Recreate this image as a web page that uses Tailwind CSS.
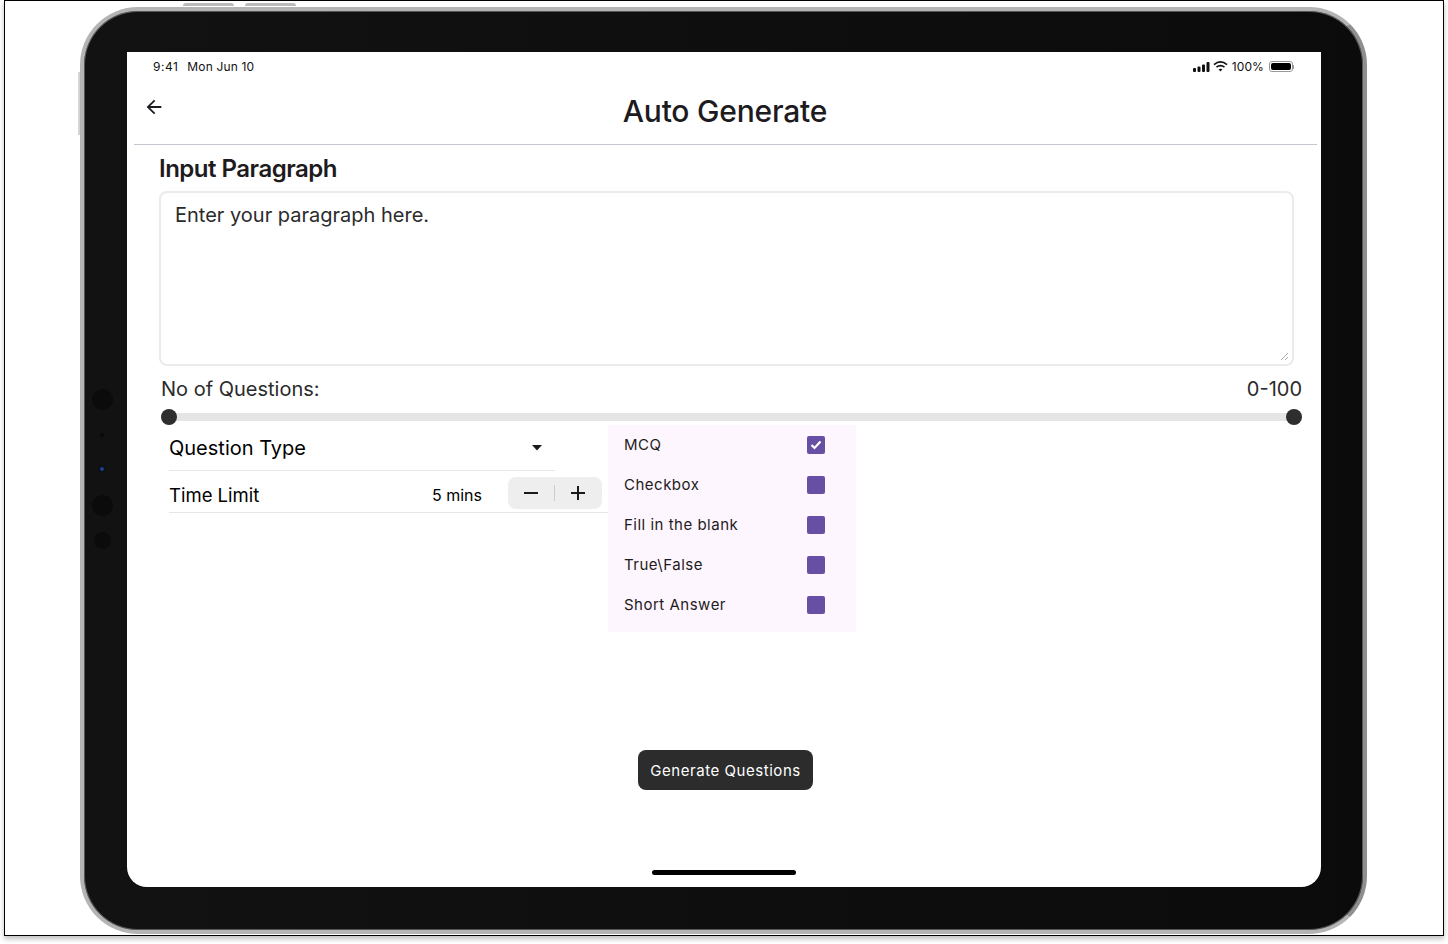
<!DOCTYPE html>
<html lang="en">
<head>
  <meta charset="UTF-8" />
  <title>Auto Generate</title>
  <script src="https://cdn.jsdelivr.net/npm/@tailwindcss/browser@4"></script>
</head>
<body class="bg-white h-[944px] w-[1448px] overflow-hidden font-['Inter',sans-serif]">
  <!-- mockup frame -->
  <div class="ml-[4px] w-[1440px] h-[936px] border border-black bg-white shadow-[0_3px_5px_rgba(0,0,0,0.25)] pl-[75px] pt-[6px]">

    <!-- device -->
    <div class="relative w-[1287px] h-[927px] rounded-[58px] bg-linear-to-r from-[#121212] to-[#0b0b0b] border-4 border-[#b4b4b4] border-r-[#8f8f8f] pl-[43px] pt-[41px] shadow-[inset_0_0_0_1px_#555]">
      <!-- hardware buttons -->
      <div class="absolute -top-[8px] left-[99px] w-[51px] h-[3px] rounded-t bg-[#bbbbbb]"></div>
      <div class="absolute -top-[8px] left-[161px] w-[51px] h-[3px] rounded-t bg-[#bbbbbb]"></div>
      <div class="absolute -left-[6px] top-[61px] w-[2px] h-[63px] bg-[#d4d4d4]"></div>
      <!-- camera dots -->
      <div class="absolute left-[8px] top-[378px] w-[21px] h-[21px] rounded-full bg-[#0b0b0b]"></div>
      <div class="absolute left-[16px] top-[422px] w-[4px] h-[4px] rounded-full bg-[#0a0a0a]"></div>
      <div class="absolute left-[14px] top-[454px] w-[8px] h-[8px] rounded-full bg-[#1d3f8f] border-2 border-[#0d0f16]"></div>
      <div class="absolute left-[8px] top-[484px] w-[21px] h-[21px] rounded-full bg-[#0b0b0b]"></div>
      <div class="absolute left-[10px] top-[521px] w-[17px] h-[17px] rounded-full bg-[#0b0b0b]"></div>

      <!-- screen -->
      <div class="relative w-[1194px] h-[835px] bg-white rounded-b-[20px] overflow-hidden flex flex-col text-[#1d1b20]">
        <!-- status bar -->
        <div class="h-[29px] shrink-0 flex items-center justify-between pl-[26px] pr-[27px] text-[12px] tracking-[0.1px] text-[#111]">
          <div class="flex gap-[8px]"><span class="tracking-[0.5px]">9:41</span><span class="ml-[1px] tracking-[0.15px]">Mon Jun 10</span></div>
          <div class="flex items-center gap-[3px]">
            <svg width="17" height="10" viewBox="0 0 17 10" fill="#111"><rect x="0" y="6" width="3" height="4" rx="1"/><rect x="4.5" y="4.5" width="3" height="5.5" rx="1"/><rect x="9" y="2.5" width="3" height="7.5" rx="1"/><rect x="13.5" y="0" width="3" height="10" rx="1"/></svg>
            <svg width="15" height="11" viewBox="0 0 15 11" fill="none" stroke="#111" stroke-width="1.7"><path d="M1 3.6C5 .3 10 .3 14 3.6"/><path d="M3.5 6.1C6 4.2 9 4.2 11.500 6.100"/><path d="M7.500 10.500 5.500 8.300C6.700 7.500 8.300 7.500 9.500 8.300Z" fill="#111" stroke="none"/></svg>
            <span class="ml-[1px]">100%</span>
            <div class="ml-[2px] flex items-center">
              <div class="w-[24px] h-[11px] rounded-[3px] border border-[#999] p-[1px]"><div class="w-full h-full rounded-[2px] bg-black"></div></div>
              <div class="w-[1px] h-[4px] bg-[#999]"></div>
            </div>
          </div>
        </div>

        <!-- app bar -->
        <div class="relative h-[64px] shrink-0 ml-[7px] mr-[4px] border-b border-[#cac4d0] flex justify-center pt-[12px]">
          <svg class="absolute left-[9px] top-[15px]" width="22" height="22" viewBox="0 0 24 24" fill="#1d1b20"><path d="M20 11H7.830l5.590-5.590L12 4l-8 8 8 8 1.410-1.410L7.830 13H20v-2z"/></svg>
          <h1 class="text-[30px] leading-[36px] font-medium tracking-[-0.2px] pr-[1px]">Auto Generate</h1>
        </div>

        <!-- form -->
        <div class="pl-[32px] pr-[19px] flex flex-col flex-1">
          <h2 class="mt-[8px] text-[24px] leading-[32px] font-semibold tracking-[-0.5px]">Input Paragraph</h2>
          <div class="relative mt-[6px] w-[1135px] h-[175px] rounded-[8px] border-2 border-[#ebebeb] pl-[14px] pt-[8px] text-[20px] leading-[28px] text-[#2b2b2b]">
            Enter your paragraph here.
            <svg class="absolute right-[3px] bottom-[3px]" width="9" height="9" viewBox="0 0 9 9" stroke="#aaa" fill="none"><path d="M1 8 8 1M5 8 8 5"/></svg>
          </div>

          <div class="mt-[9px] ml-[2px] flex justify-between text-[20px] leading-[28px] text-[#2b2b2b]">
            <span>No of Questions:</span><span>0-100</span>
          </div>

          <!-- slider -->
          <div class="relative mt-[10px] ml-[2px] w-[1141px] h-[8px] bg-[#e5e5e5] rounded-full">
            <div class="absolute left-0 -top-[4px] w-[16px] h-[16px] rounded-full bg-[#2e2e2e]"></div>
            <div class="absolute right-0 -top-[4px] w-[16px] h-[16px] rounded-full bg-[#2e2e2e]"></div>
          </div>

          <div class="flex">
            <div class="ml-[10px] mt-[8px] w-[439px]">
              <div class="w-[386px] h-[42px] border-b border-[#e6e6e6] flex items-center justify-between pr-[12px] pb-[3px] text-[20px] text-black">
                <span>Question Type</span>
                <svg width="12" height="6" viewBox="0 0 12 6" fill="#1a1a1a"><path d="M1 0h10L6 5.500z"/></svg>
              </div>
              <div class="h-[42px] border-b border-[#e6e6e6] flex items-center text-black">
                <span class="text-[18.5px] w-[263px] pt-[8px]">Time Limit</span>
                <span class="text-[16px] w-[76px] pt-[7px]">5 mins</span>
                <div class="w-[94px] h-[32px] bg-[#eeeeee] rounded-[8px] flex items-center justify-center mt-[3px]">
                  <svg width="46" height="32" viewBox="0 0 46 32" stroke="#1a1a1a" stroke-width="2"><path d="M16 16h14"/></svg>
                  <div class="w-[1px] h-[16px] bg-[#cccccc]"></div>
                  <svg width="47" height="32" viewBox="0 0 47 32" stroke="#1a1a1a" stroke-width="2"><path d="M16 16h14M23 9v14"/></svg>
                </div>
              </div>
            </div>

            <!-- question type menu -->
            <div class="mt-[4px] w-[248px] h-[207px] bg-[#fdf6fe] text-[15px] tracking-[0.5px] text-[#1d1b20]">
              <div class="h-[40px] pl-[16px] pr-[31px] flex items-center justify-between">
                <span>MCQ</span>
                <div class="w-[18px] h-[18px] rounded-[2px] bg-[#6750a4] flex items-center justify-center">
                  <svg width="12" height="10" viewBox="0 0 12 10" fill="none" stroke="#fff" stroke-width="2.2"><path d="M1.500 5 4.500 8 10.500 1.500"/></svg>
                </div>
              </div>
              <div class="h-[40px] pl-[16px] pr-[31px] flex items-center justify-between"><span>Checkbox</span><div class="w-[18px] h-[18px] rounded-[2px] bg-[#6750a4]"></div></div>
              <div class="h-[40px] pl-[16px] pr-[31px] flex items-center justify-between"><span>Fill in the blank</span><div class="w-[18px] h-[18px] rounded-[2px] bg-[#6750a4]"></div></div>
              <div class="h-[40px] pl-[16px] pr-[31px] flex items-center justify-between"><span>True\False</span><div class="w-[18px] h-[18px] rounded-[2px] bg-[#6750a4]"></div></div>
              <div class="h-[40px] pl-[16px] pr-[31px] flex items-center justify-between"><span>Short Answer</span><div class="w-[18px] h-[18px] rounded-[2px] bg-[#6750a4]"></div></div>
            </div>
          </div>
        </div>

        <!-- generate button -->
        <button class="absolute left-[511px] top-[698px] w-[175px] h-[40px] pt-[2px] rounded-[8px] bg-[#2c2c2c] text-white text-[15px] tracking-[0.55px]">Generate Questions</button>

        <!-- home indicator -->
        <div class="absolute left-[525px] bottom-[12px] w-[144px] h-[5px] rounded-full bg-black"></div>
      </div>
    </div>
  </div>
</body>
</html>
